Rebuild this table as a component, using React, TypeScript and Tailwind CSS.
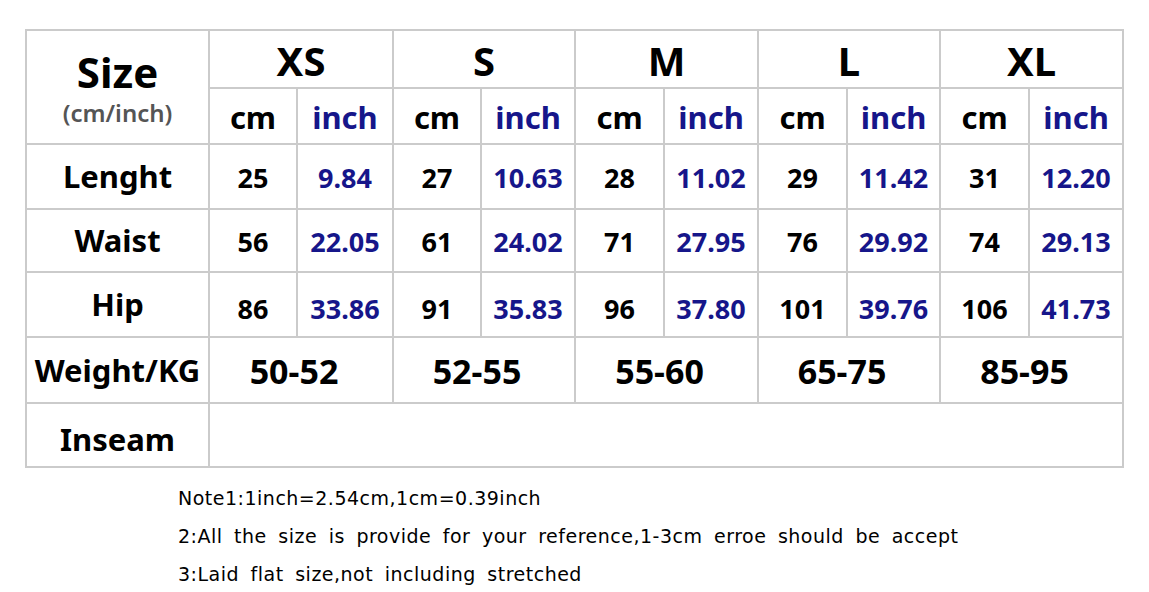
const sizes = ['XS', 'S', 'M', 'L', 'XL'];

const rows = [
  { label: 'Lenght', pad: 'pt-[4px]', vals: [['25', '9.84'], ['27', '10.63'], ['28', '11.02'], ['29', '11.42'], ['31', '12.20']] },
  { label: 'Waist', pad: 'pt-[4px]', vals: [['56', '22.05'], ['61', '24.02'], ['71', '27.95'], ['76', '29.92'], ['74', '29.13']] },
  { label: 'Hip', pad: 'pt-[10px]', vals: [['86', '33.86'], ['91', '35.83'], ['96', '37.80'], ['101', '39.76'], ['106', '41.73']] },
];

const weights = ['50-52', '52-55', '55-60', '65-75', '85-95'];

const colWidths = [183, 88, 96, 88, 94, 89, 94, 89, 93, 89, 94];
const rowH = ['h-[65px]', 'h-[63px]', 'h-[65px]'];

const cell = 'border-2 border-[#cbcbcb] text-center align-middle p-0';
const label = "font-['Noto_Sans',sans-serif] font-bold text-[31px] text-black";
const num = "font-['Noto_Sans',sans-serif] font-bold text-[27px]";

export default function App() {
  return (
    <div className="min-h-screen w-[1149px] bg-white pl-[25px] pt-[29px]">
      <table className="table-fixed border-collapse w-[1098px]">
        <colgroup>
          {colWidths.map((w, i) => (
            <col key={i} style={{ width: w }} />
          ))}
        </colgroup>
        <tbody>
          <tr className="h-[58px]">
            <td rowSpan={2} className={cell}>
              <div className="flex flex-col items-center pt-[4px]">
                <span className="font-['Noto_Sans',sans-serif] font-bold text-[42px] leading-[48px] text-black">Size</span>
                <span className="font-['Noto_Sans',sans-serif] font-semibold text-[24px] leading-[34px] text-[#555]">(cm/inch)</span>
              </div>
            </td>
            {sizes.map((s) => (
              <td key={s} colSpan={2} className={cell + ' pt-[5px]'}>
                <span className="font-['Noto_Sans',sans-serif] font-bold text-[40px] text-black leading-none">{s}</span>
              </td>
            ))}
          </tr>
          <tr className="h-[56px]">
            {sizes.map((s) => [
              <td key={s + 'c'} className={cell + ' pt-[5px]'}>
                <span className="font-['Noto_Sans',sans-serif] font-bold text-[31px] text-black leading-none">cm</span>
              </td>,
              <td key={s + 'i'} className={cell + ' pt-[5px]'}>
                <span className="font-['Noto_Sans',sans-serif] font-bold text-[31px] text-[#16168a] leading-none">inch</span>
              </td>,
            ])}
          </tr>
          {rows.map((r, ri) => (
            <tr key={r.label} className={rowH[ri]}>
              <td className={cell}>
                <span className={label}>{r.label}</span>
              </td>
              {r.vals.map(([c, inch], i) => [
                <td key={i + 'c'} className={`${cell} ${r.pad}`}>
                  <span className={`${num} text-black`}>{c}</span>
                </td>,
                <td key={i + 'i'} className={`${cell} ${r.pad}`}>
                  <span className={`${num} text-[#16168a]`}>{inch}</span>
                </td>,
              ])}
            </tr>
          ))}
          <tr className="h-[66px]">
            <td className={cell}>
              <span className={label}>Weight/KG</span>
            </td>
            {weights.map((w) => (
              <td key={w} colSpan={2} className={cell + ' pt-[3px]'}>
                <span className="font-['Noto_Sans',sans-serif] font-bold text-[34px] text-black pr-[14px]">{w}</span>
              </td>
            ))}
          </tr>
          <tr className="h-[64px]">
            <td className={cell + ' pt-[8px]'}>
              <span className={label}>Inseam</span>
            </td>
            <td colSpan={10} className={cell}></td>
          </tr>
        </tbody>
      </table>
      <div className="pl-[153px] pt-[11px] font-['DejaVu_Sans',sans-serif] text-[19px] tracking-[0.5px] [word-spacing:5px] text-black leading-[38px]">
        <div>Note1:1inch=2.54cm,1cm=0.39inch</div>
        <div>2:All the size is provide for your reference,1-3cm erroe should be accept</div>
        <div>3:Laid flat size,not including stretched</div>
      </div>
    </div>
  );
}
